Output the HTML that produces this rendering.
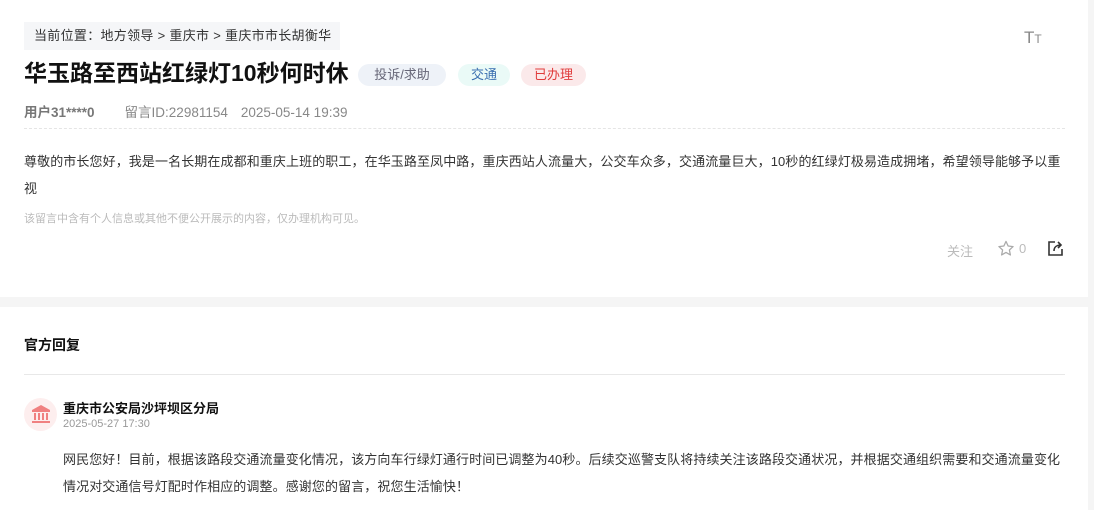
<!DOCTYPE html><html><head><meta charset="utf-8"><style>
body{margin:0;width:1094px;height:510px;background:#f5f5f5;font-family:"Liberation Sans","Noto Sans CJK SC",sans-serif;overflow:hidden;position:relative}
.card{position:absolute;left:0;width:1088px;background:#fff}
.a{position:absolute;white-space:nowrap}
.tag{position:absolute;top:64px;height:22px;line-height:22px;border-radius:11px;font-size:13px;text-align:center}
</style></head><body>
<div class="card" style="top:0;height:297px">
<div class="a" style="left:24px;top:22px;width:316px;height:28px;background:#f5f6f8;font-size:13px;line-height:28px;color:#333;padding-left:10px;box-sizing:border-box;letter-spacing:0.3px">当前位置：地方领导 &gt; 重庆市 &gt; 重庆市市长胡衡华</div>
<div class="a" style="left:1024px;top:28px;font-size:17px;color:#888">T<span style="font-size:12px">T</span></div>
<div class="a" style="left:24px;top:58px;font-size:23px;font-weight:bold;color:#111;line-height:30px">华玉路至西站红绿灯10秒何时休</div>
<div class="tag" style="left:358px;width:88px;background:#eef2f8;color:#667">投诉/求助</div>
<div class="tag" style="left:458px;width:52px;background:#eafaf7;color:#3a6fb0">交通</div>
<div class="tag" style="left:521px;width:65px;background:#fbe9ea;color:#e03b3b">已办理</div>
<div class="a" style="left:24px;top:104px;font-size:13.5px;line-height:18px;color:#888"><b style="color:#777">用户31****0</b><span style="margin-left:30px">留言ID:22981154</span><span style="margin-left:13px">2025-05-14 19:39</span></div>
<div class="a" style="left:24px;top:128px;width:1041px;border-top:1px dashed #e5e5e5"></div>
<div class="a" style="left:24px;top:148px;width:1042px;white-space:normal;font-size:13px;line-height:27px;color:#333;letter-spacing:0.1px">尊敬的市长您好，我是一名长期在成都和重庆上班的职工，在华玉路至凤中路，重庆西站人流量大，公交车众多，交通流量巨大，10秒的红绿灯极易造成拥堵，希望领导能够予以重视</div>
<div class="a" style="left:24px;top:210px;font-size:11px;color:#bbb">该留言中含有个人信息或其他不便公开展示的内容，仅办理机构可见。</div>
<div class="a" style="left:947px;top:241px;font-size:13px;color:#bbb">关注</div>
<svg class="a" style="left:997px;top:240px" width="18" height="17" viewBox="0 0 24 24"><path d="M12 2l3 6.5 7 .8-5.2 4.8 1.4 7L12 17.6 5.8 21.1l1.4-7L2 9.3l7-.8z" fill="none" stroke="#aaa" stroke-width="1.8" stroke-linejoin="round"/></svg>
<div class="a" style="left:1019px;top:241px;font-size:13px;color:#bbb">0</div>
<svg class="a" style="left:1047px;top:240px" width="17" height="17" viewBox="0 0 17 17"><path d="M8 2H2v13h13V9" fill="none" stroke="#333" stroke-width="1.6"/><path d="M7 11c0-4 3-6 7-6M11 2l3 3-3 3" fill="none" stroke="#333" stroke-width="1.6"/></svg>
</div>
<div class="card" style="top:307px;height:203px">
<div class="a" style="left:24px;top:28px;font-size:14px;font-weight:bold;color:#111">官方回复</div>
<div class="a" style="left:24px;top:67px;width:1041px;border-top:1px solid #e8e8e8"></div>
<div class="a" style="left:24px;top:91px;width:33px;height:33px;border-radius:50%;background:#fdeeee"></div>
<svg class="a" style="left:31px;top:97px" width="20" height="20" viewBox="0 0 20 20" fill="#f08080"><path d="M10 1L1 6v2h18V6z"/><rect x="3" y="9" width="2" height="7"/><rect x="7" y="9" width="2" height="7"/><rect x="11" y="9" width="2" height="7"/><rect x="15" y="9" width="2" height="7"/><rect x="1" y="17" width="18" height="2"/></svg>
<div class="a" style="left:63px;top:91px;font-size:13px;font-weight:bold;color:#111">重庆市公安局沙坪坝区分局</div>
<div class="a" style="left:63px;top:111px;font-size:11px;color:#999">2025-05-27 17:30</div>
<div class="a" style="left:63px;top:139px;width:1003px;white-space:normal;font-size:13px;line-height:27px;color:#333;letter-spacing:0.1px">网民您好！目前，根据该路段交通流量变化情况，该方向车行绿灯通行时间已调整为40秒。后续交巡警支队将持续关注该路段交通状况，并根据交通组织需要和交通流量变化情况对交通信号灯配时作相应的调整。感谢您的留言，祝您生活愉快！</div>
</div>
</body></html>
